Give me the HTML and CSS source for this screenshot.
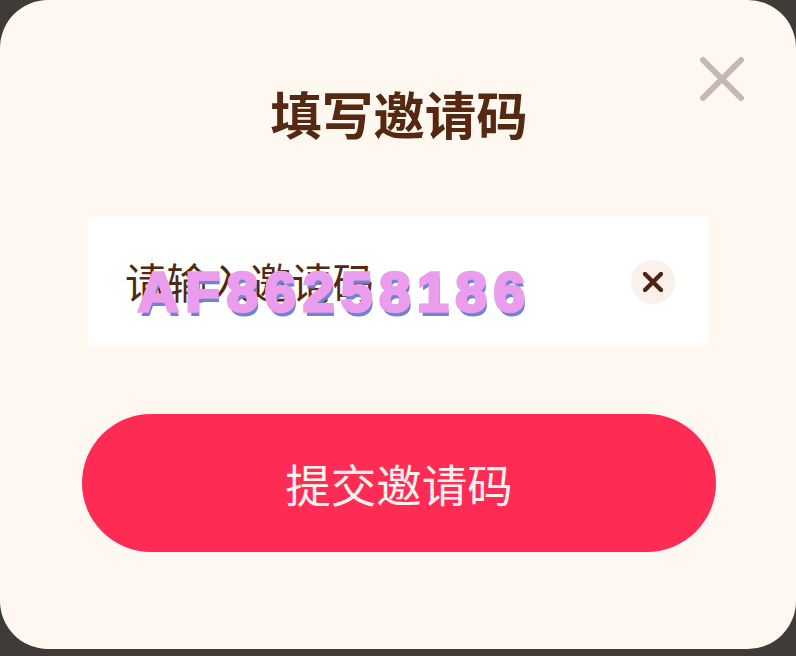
FILE: index.html
```html
<!DOCTYPE html>
<html lang="zh-CN">
<head>
<meta charset="utf-8">
<title>填写邀请码</title>
<link rel="stylesheet" href="styles.css">
</head>
<body>
<main class="dialog">
  <button class="close" aria-label="关闭">
    <svg viewBox="0 0 46 46" width="46" height="46"><path d="M4 4 L42 42 M42 4 L4 42" /></svg>
  </button>
  <h1 class="title">填写邀请码</h1>
  <div class="field">
    <span class="placeholder">请输入邀请码</span>
    <span class="clear">
      <svg viewBox="0 0 20 20" width="20" height="20"><path d="M2 2 L18 18 M18 2 L2 18" /></svg>
    </span>
    <span class="watermark">AF86258186</span>
  </div>
  <button class="submit">提交邀请码</button>
</main>
</body>
</html>
```
FILE: styles.css
```css
* { box-sizing: border-box; }
html, body { margin: 0; height: 100%; }
body {
  width: 796px;
  height: 656px;
  overflow: hidden;
  background: #3f3b38;
  font-family: "Noto Sans CJK SC", "Noto Sans", sans-serif;
}
.dialog {
  position: relative;
  height: 649px;
  background: #fff8f1;
  border-radius: 48px;
  display: flex;
  flex-direction: column;
  align-items: center;
  padding-top: 77px;
}
.close {
  position: absolute;
  top: 56px;
  right: 51px;
  width: 46px;
  height: 46px;
  padding: 0;
  border: 0;
  background: none;
  display: flex;
}
.close path {
  stroke: #c6b7b1;
  stroke-width: 6;
  stroke-linecap: round;
  fill: none;
}
.title {
  margin: 0;
  font-size: 51.5px;
  line-height: 72px;
  font-weight: 700;
  color: #552812;
  transform: translateX(1px);
}
.field {
  position: relative;
  margin-top: 68px;
  width: 620px;
  height: 128px;
  background: #fff;
  border-radius: 4px;
  box-shadow: 0 0 2px #fff;
  display: flex;
  align-items: center;
  justify-content: space-between;
  padding: 0 33px 0 37px;
}
.placeholder {
  font-size: 41.5px;
  line-height: 56px;
  color: #552812;
}
.clear {
  width: 44px;
  height: 44px;
  margin-top: 2px;
  border-radius: 50%;
  background: #faf0ec;
  display: flex;
  align-items: center;
  justify-content: center;
}
.clear path {
  stroke: #4f2413;
  stroke-width: 4.4;
  stroke-linecap: round;
  fill: none;
}
.watermark {
  position: absolute;
  left: 50px;
  top: 46px;
  font-family: "Liberation Sans", sans-serif;
  font-size: 56px;
  line-height: 58px;
  font-weight: 700;
  letter-spacing: 7px;
  white-space: nowrap;
  color: #ea9ded;
  -webkit-text-stroke: 3.5px #ea9ded;
  text-shadow: 2px 5px 0 #6d84d4;
}
.submit {
  margin-top: 69px;
  margin-left: 2px;
  width: 634px;
  height: 138px;
  border: 0;
  border-radius: 69px;
  background: #fe2c55;
  color: #fff2ee;
  font-family: inherit;
  font-size: 45.5px;
  line-height: 60px;
}
```
